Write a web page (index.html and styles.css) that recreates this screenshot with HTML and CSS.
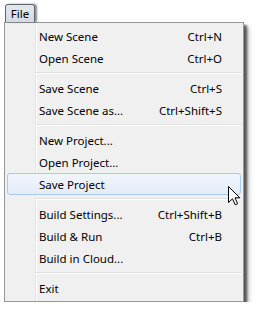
FILE: index.html
```html
<!DOCTYPE html>
<html>
<head>
<meta charset="utf-8">
<link rel="stylesheet" href="styles.css">
</head>
<body>
<div class="wrap">
  <div class="menubar"><span class="file">File</span></div>
  <div class="menu">
    <div class="item"><span>New Scene</span><span class="key">Ctrl+N</span></div>
    <div class="item"><span>Open Scene</span><span class="key">Ctrl+O</span></div>
    <div class="sep"></div>
    <div class="item"><span>Save Scene</span><span class="key">Ctrl+S</span></div>
    <div class="item"><span>Save Scene as...</span><span class="key">Ctrl+Shift+S</span></div>
    <div class="sep"></div>
    <div class="item"><span>New Project...</span></div>
    <div class="item"><span>Open Project...</span></div>
    <div class="item hover"><span>Save Project</span>
      <svg class="cursor" width="13" height="20" viewBox="0 0 13 20"><path d="M0.5 0.5 L0.5 16.5 L4.5 12.8 L7.2 18.8 L9.6 17.8 L7 11.8 L11.8 11.8 Z" fill="#fff" stroke="#000" stroke-width="1" stroke-linejoin="miter"/></svg>
    </div>
    <div class="sep"></div>
    <div class="item"><span>Build Settings...</span><span class="key">Ctrl+Shift+B</span></div>
    <div class="item"><span>Build &amp; Run</span><span class="key">Ctrl+B</span></div>
    <div class="item"><span>Build in Cloud...</span></div>
    <div class="sep"></div>
    <div class="item"><span>Exit</span></div>
  </div>
</div>
</body>
</html>
```
FILE: styles.css
```css
html, body {
  margin: 0;
  padding: 0;
  background: #fff;
}
body {
  font-family: "Noto Sans", "Open Sans", sans-serif;
  font-size: 11.5px;
  color: #000;
}
.wrap {
  padding: 4px 0 0 4px;
}
.menubar {
  display: flex;
  height: 18px;
}
.file {
  margin-left: 1px;
  width: 28px;
  height: 17px;
  border: 1px solid #5c6673;
  border-bottom: none;
  border-radius: 3px 3px 0 0;
  background: linear-gradient(#e4e8ee, #d4dae3);
  box-shadow: 2px 0 2px rgba(0,0,0,0.45);
  display: flex;
  align-items: center;
  justify-content: center;
  line-height: 16px;
  position: relative;
  z-index: 2;
}
.menu {
  position: relative;
  width: 234px;
  border: 1px solid #979797;
  padding: 2px;
  background-color: #f0f0f0;
  background-image: linear-gradient(to right, transparent 30px, #e2e3e3 30px, #e2e3e3 31px, #fff 31px, #fff 32px, transparent 32px);
  box-shadow: 3px 3px 2px rgba(0,0,0,0.55), 5px 5px 4px rgba(0,0,0,0.25);
}
.item {
  position: relative;
  height: 22px;
  box-sizing: border-box;
  display: flex;
  align-items: center;
  justify-content: space-between;
  padding: 0 18px 0 31px;
  border: 1px solid transparent;
  border-radius: 3px;
}
.item.hover {
  border-color: #a8caf0;
  background: linear-gradient(#f1f6fd, #e3ecf8);
}
.sep {
  height: 8px;
  margin-left: 28px;
  background: linear-gradient(transparent 3px, #e0e0e0 3px, #e0e0e0 4px, #fff 4px, #fff 5px, transparent 5px);
}
.cursor {
  position: absolute;
  left: 220px;
  top: 12px;
  z-index: 3;
}
```
